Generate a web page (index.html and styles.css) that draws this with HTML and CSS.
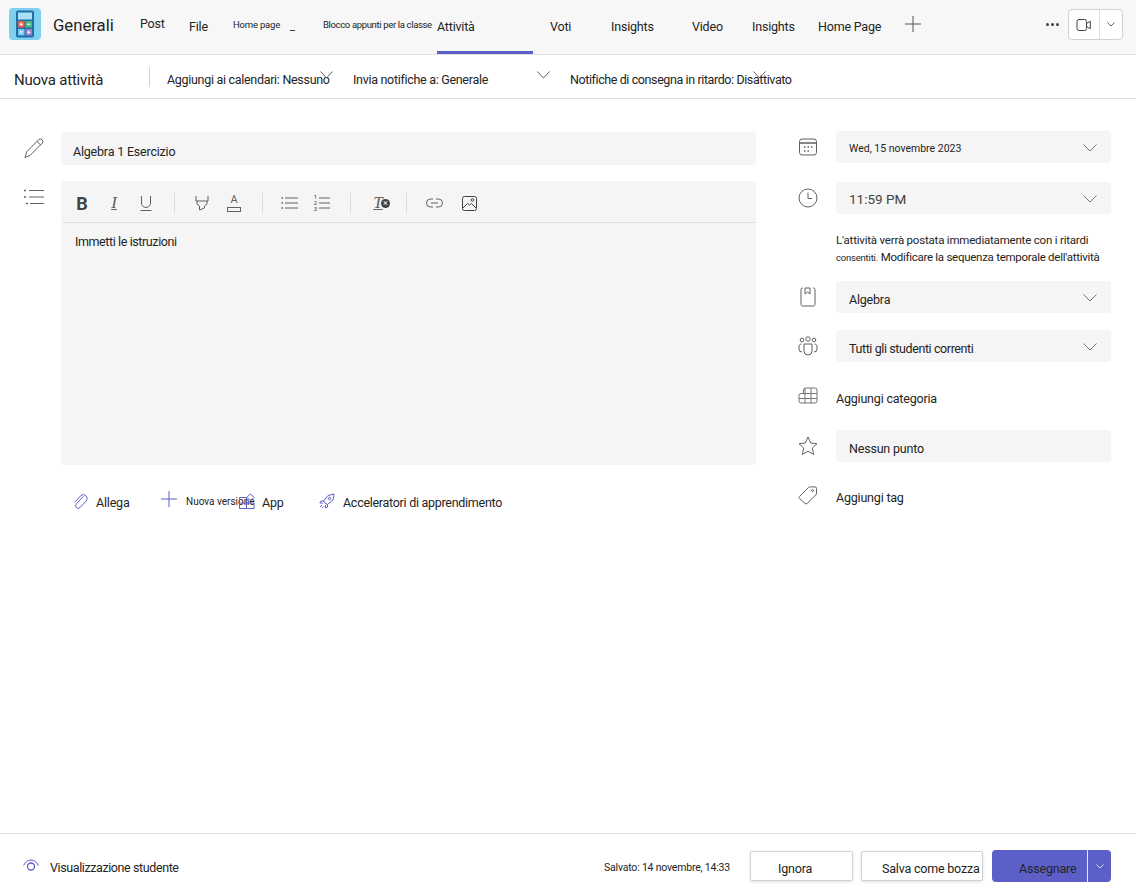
FILE: index.html
```html
<!DOCTYPE html>
<html lang="it">
<head>
    <meta charset="UTF-8">
    <meta name="viewport" content="width=device-width, initial-scale=1.0">
    <title>Nuova attività</title>
    <link rel="stylesheet" href="styles.css">
</head>
<body>
<div class="page">
    <!-- top tabs -->
    <header class="topbar">
        <svg class="logo" width="32" height="32" viewBox="0 0 32 32">
            <rect width="32" height="32" rx="4" fill="#7fd0ee"/>
            <rect x="7" y="2.500" width="18" height="27" rx="2" fill="#1d6fa8"/>
            <rect x="9" y="4.500" width="14" height="7" fill="#a8e0f5"/>
            <rect x="9" y="13" width="6.500" height="6.500" fill="#e8604c"/>
            <rect x="16.500" y="13" width="6.500" height="6.500" fill="#49b883"/>
            <rect x="9" y="21" width="6.500" height="6.500" fill="#6fc4ea"/>
            <rect x="16.500" y="21" width="6.500" height="6.500" fill="#9a7cd0"/>
            <path d="M10.500 16.200h3.500M12.200 14.500v3.500M18 16.200h3.500M10.800 22.800l3 3M13.800 22.800l-3 3M18 24.200h3.500M19.700 22.500v3.500" stroke="#fff" stroke-width="1"/>
        </svg>
        <div class="channel">Generali</div>
        <nav class="tabs">
            <a class="tab tab-post">Post</a>
            <a class="tab tab-file">File</a>
            <a class="tab tab-small tab-home">Home page</a>
            <a class="tab tab-dash">_</a>
            <a class="tab tab-small tab-notes">Blocco appunti per la classe</a>
            <a class="tab tab-active">Attività</a>
            <a class="tab tab-voti">Voti</a>
            <a class="tab tab-ins1">Insights</a>
            <a class="tab tab-video">Video</a>
            <a class="tab tab-ins2">Insights</a>
            <a class="tab tab-hp">Home Page</a>
            <svg class="tab-plus" width="16" height="16" viewBox="0 0 16 16"><path d="M8 0v16M0 8h16" stroke="#555" stroke-width="1"/></svg>
        </nav>
        <div class="more"><i></i><i></i><i></i></div>
        <div class="call">
            <div class="call-cam">
                <svg width="16" height="14" viewBox="0 0 16 14" fill="none" stroke="#424242"><rect x="1" y="1.500" width="9.500" height="11" rx="2"/><path d="M10.500 5.500l3.800-2.200v7.400l-3.800-2.200"/></svg>
            </div>
            <div class="call-more">
                <svg width="8" height="5" viewBox="0 0 8 5" fill="none" stroke="#616161"><path d="M.5.5L4 4 7.500.5"/></svg>
            </div>
        </div>
    </header>

    <!-- assignment options -->
    <div class="subbar">
        <div class="sub-title">Nuova attività</div>
        <div class="sub-sep"></div>
        <div class="sub-item sub-cal">Aggiungi ai calendari: Nessuno<svg class="sub-chev" width="13" height="8" viewBox="0 0 13 8" fill="none" stroke="#616161"><path d="M.5.5L6.500 7 12.500.5"/></svg></div>
        <div class="sub-item sub-notify">Invia notifiche a: Generale<svg class="sub-chev" width="13" height="8" viewBox="0 0 13 8" fill="none" stroke="#616161"><path d="M.5.5L6.500 7 12.500.5"/></svg></div>
        <div class="sub-item sub-late">Notifiche di consegna in ritardo: Disattivato<svg class="sub-chev" width="13" height="8" viewBox="0 0 13 8" fill="none" stroke="#616161"><path d="M.5.5L6.500 7 12.500.5"/></svg></div>
    </div>

    <main class="content">
        <section class="left">
            <div class="left-row">
                <svg class="left-icon" width="22" height="22" viewBox="0 0 22 22" fill="none" stroke="#616161"><path d="M2 20.500l1.500-5.500L15.500 2.800a2.500 2.500 0 0 1 3.700 3.400L7 18.500z"/><path d="M14 4.500l3.700 3.500"/></svg>
                <div class="field title-field">Algebra 1 Esercizio</div>
            </div>
            <div class="left-row">
                <svg class="left-icon list-icon" width="22" height="16" viewBox="0 0 22 16" fill="none" stroke="#616161"><path d="M6 1.500h15M6 8h15M7 14.500h14"/><path d="M1 1.500h2M1 8h2M3 14.500h2" stroke-width="1.500"/></svg>
                <div class="editor">
                    <div class="toolbar">
                        <button class="tool t-bold">B</button>
                        <button class="tool t-ital">I</button>
                        <button class="tool"><svg width="16" height="16" viewBox="0 0 16 16" fill="none" stroke="#616161"><path d="M3.500 1v7a4.500 4.500 0 0 0 9 0V1M2.500 15.500h11"/></svg></button>
                        <span class="tool-sep"></span>
                        <button class="tool"><svg width="16" height="16" viewBox="0 0 16 16" fill="none" stroke="#616161"><path d="M2 1v5h12V1M3 6v3l2.500 2v4l5-2v-2l2.500-2V6"/></svg></button>
                        <button class="tool t-color">A<span class="t-color-box"></span></button>
                        <span class="tool-sep"></span>
                        <button class="tool"><svg width="18" height="14" viewBox="0 0 18 14" fill="none" stroke="#616161"><path d="M4 2h13M4 7h13M4 12h13"/><path d="M.5 2h1.500M.5 7h1.500M.5 12h1.500" stroke-width="1.500"/></svg></button>
                        <button class="tool t-numbered"><span class="t-num">1<br>2<br>3</span><svg width="11" height="12" viewBox="0 0 11 12" fill="none" stroke="#616161"><path d="M0 1h11M0 6h11M0 11h11"/></svg></button>
                        <span class="tool-sep"></span>
                        <button class="tool t-clear">T</button>
                        <span class="tool-sep"></span>
                        <button class="tool"><svg width="17" height="10" viewBox="0 0 17 10" fill="none" stroke="#616161"><path d="M7 1H4.500a4 4 0 0 0 0 8H7M10 1h2.500a4 4 0 0 1 0 8H10M5 5h7"/></svg></button>
                        <button class="tool tool-image"><svg width="15" height="15" viewBox="0 0 15 15" fill="none" stroke="#424242"><rect x=".5" y=".5" width="14" height="14" rx="2"/><path d="M1 12l4.500-4.500L7.500 9 9.500 7.500 14 12"/><circle cx="10.500" cy="4" r="1.300"/></svg></button>
                    </div>
                    <div class="editor-body">Immetti le istruzioni</div>
                </div>
            </div>
            <div class="actions">
                <div class="action act-attach">
                    <svg width="15" height="17" viewBox="0 0 15 17" fill="none" stroke="#5b5fc7"><path d="M10 3L3 10.500a2.600 2.600 0 0 0 3.800 3.600L13 7.500a3.800 3.800 0 0 0-5.500-5.200L1.500 8.800" transform="translate(.3 .4)"/></svg>
                    <span>Allega</span>
                </div>
                <div class="action act-new">
                    <svg width="16" height="16" viewBox="0 0 16 16"><path d="M8 0v16M0 8h16" stroke="#5b5fc7"/></svg>
                    <span class="act-small">Nuova versione</span>
                </div>
                <div class="action act-app">
                    <svg width="16" height="16" viewBox="0 0 16 16" fill="none" stroke="#5b5fc7"><path d="M.5 4.500h7v11h-7zM.5 10h7M7.500 10h7.500v5.500H7.500"/><path d="M11.500.8L15 4.300 11.500 7.800 8 4.300z"/></svg>
                    <span>App</span>
                </div>
                <div class="action act-rocket">
                    <svg width="16" height="16" viewBox="0 0 16 16" fill="none" stroke="#5b5fc7"><path d="M6 10L4.500 8 9 2.500 15 1l-1 6-5.500 4.500z"/><circle cx="10.500" cy="5.500" r="1.200"/><path d="M4.500 8H2L.8 9.800l3 .5M8.500 11.500V14l-1.800 1-.5-3M3 12l-2 2M4.500 13.500L3 15"/></svg>
                    <span>Acceleratori di apprendimento</span>
                </div>
            </div>
        </section>

        <aside class="right">
            <div class="side-row">
                <svg class="side-icon" width="20" height="20" viewBox="0 0 20 20" fill="none" stroke="#616161"><rect x="1.500" y="2" width="17" height="16" rx="2.500"/><path d="M1.500 6h17" stroke-width="1.500"/><path d="M6 10h1.500M9.500 10H11M13 10h1.500M6 14h1.500M9.500 14H11" stroke-width="1.500"/></svg>
                <div class="field select date-field">Wed, 15 novembre 2023<svg class="chev" width="14" height="8" viewBox="0 0 14 8" fill="none" stroke="#757575"><path d="M.5.5L7 7 13.500.5"/></svg></div>
            </div>
            <div class="side-row side-gap">
                <svg class="side-icon" width="20" height="20" viewBox="0 0 20 20" fill="none" stroke="#616161"><circle cx="10" cy="10" r="9"/><path d="M10 4.500V10.500h4"/></svg>
                <div class="field select time-field">11:59 PM<svg class="chev" width="14" height="8" viewBox="0 0 14 8" fill="none" stroke="#757575"><path d="M.5.5L7 7 13.500.5"/></svg></div>
            </div>
            <p class="note">L'attività verrà postata immediatamente con i ritardi<br><span class="note-small">consentiti.</span> <span class="note-link">Modificare la sequenza temporale dell'attività</span></p>
            <div class="side-row">
                <svg class="side-icon" width="20" height="20" viewBox="0 0 20 20" fill="none" stroke="#616161"><path d="M5 1h-.5A1.500 1.500 0 0 0 3 2.500v15A1.500 1.500 0 0 0 4.500 19h11a1.500 1.500 0 0 0 1.500-1.500v-15A1.500 1.500 0 0 0 15.500 1H15"/><path d="M7 1h5v6l-2.500-2L7 7z"/></svg>
                <div class="field select">Algebra<svg class="chev" width="14" height="8" viewBox="0 0 14 8" fill="none" stroke="#757575"><path d="M.5.5L7 7 13.500.5"/></svg></div>
            </div>
            <div class="side-row">
                <svg class="side-icon" width="20" height="20" viewBox="0 0 20 20" fill="none" stroke="#616161"><circle cx="4" cy="4" r="1.800"/><circle cx="10" cy="3" r="2.200"/><circle cx="16" cy="4" r="1.800"/><path d="M6 8h8v7a4 4 0 0 1-8 0zM3.500 8C2 8 1 9 1 10v3a3 3 0 0 0 3 3M16.500 8C18 8 19 9 19 10v3a3 3 0 0 1-3 3"/></svg>
                <div class="field select tight">Tutti gli studenti correnti<svg class="chev" width="14" height="8" viewBox="0 0 14 8" fill="none" stroke="#757575"><path d="M.5.5L7 7 13.500.5"/></svg></div>
            </div>
            <div class="side-row side-gap">
                <svg class="side-icon" width="20" height="20" viewBox="0 0 20 20" fill="none" stroke="#757575"><path d="M5.500 6.500V3a2 2 0 0 1 2-2H17a2 2 0 0 1 2 2v11a2 2 0 0 1-2 2H3a2 2 0 0 1-2-2V8.500a2 2 0 0 1 2-2H19M1 11.500h18M7 1v15M13 1v15"/></svg>
                <div class="plain">Aggiungi categoria</div>
            </div>
            <div class="side-row">
                <svg class="side-icon" width="20" height="20" viewBox="0 0 20 20" fill="none" stroke="#616161"><path d="M10 1l2.700 6 6.300.7-4.700 4.300 1.300 6.500L10 15.200l-5.600 3.300L5.700 12 1 7.700 7.300 7z"/></svg>
                <div class="field">Nessun punto</div>
            </div>
            <div class="side-row">
                <svg class="side-icon" width="20" height="20" viewBox="0 0 20 20" fill="none" stroke="#616161"><path d="M1.500 11.500L10.500 2.500a2 2 0 0 1 1.500-.6h5a1.500 1.500 0 0 1 1.500 1.500v5a2 2 0 0 1-.6 1.500L9 18.500a1.500 1.500 0 0 1-2 0l-5.500-5a1.400 1.400 0 0 1 0-2z"/><circle cx="14.500" cy="5.500" r="1"/></svg>
                <div class="plain plain-tag">Aggiungi tag</div>
            </div>
        </aside>
    </main>

    <footer class="footer">
        <svg class="eye" width="16" height="13" viewBox="0 0 16 13" fill="none" stroke="#5b5fc7"><path d="M.7 6.500C2 3 5 1 8 1s6 2 7.300 5.500"/><circle cx="8" cy="7.500" r="3.500" stroke-width="1.300"/></svg>
        <div class="student">Visualizzazione studente</div>
        <div class="saved">Salvato: 14 novembre, 14:33</div>
        <button class="btn btn-ignore">Ignora</button>
        <button class="btn btn-draft">Salva come bozza</button>
        <div class="assign">
            <div class="assign-main">Assegnare</div>
            <div class="assign-more"><svg width="8" height="5" viewBox="0 0 8 5" fill="none" stroke="#d8d9f2"><path d="M.5.5L4 4 7.500.5"/></svg></div>
        </div>
    </footer>
</div>
</body>
</html>
```

FILE: styles.css
```css
* {
    box-sizing: border-box;
}
body {
    margin: 0;
    font-family: 'Roboto', 'Liberation Sans', sans-serif;
    font-size: 12.5px;
    letter-spacing: -0.2px;
    color: #242424;
    background-color: #fff;
}
.page {
    height: 892px;
    display: flex;
    flex-direction: column;
    overflow: hidden;
}
svg {
    flex-shrink: 0;
}

/* top bar */
.topbar {
    height: 55px;
    flex-shrink: 0;
    display: flex;
    align-items: flex-start;
    padding-left: 9px;
    background-color: #f7f7f7;
    border-bottom: 1px solid #e0e0e0;
}
.logo {
    margin-top: 8px;
}
.channel {
    flex-shrink: 0;
    width: 87px;
    margin: 14px 0 0 12px;
    font-size: 16.700px;
    letter-spacing: 0;
    line-height: 24px;
}
.tabs {
    display: flex;
    align-items: flex-start;
    flex-shrink: 0;
    height: 54px;
}
.tab {
    display: block;
    flex-shrink: 0;
    white-space: nowrap;
    padding-top: 19px;
    line-height: 16px;
}
.tab-small {
    font-size: 9.500px;
    padding-top: 17px;
}
.tab-post { width: 49px; padding-top: 16px; }
.tab-file { width: 44px; }
.tab-home { width: 57px; }
.tab-dash { width: 33px; padding-top: 19px; font-size: 11px; }
.tab-notes { width: 114px; letter-spacing: -0.35px; }
.tab-active {
    width: 96px;
    height: 54px;
    border-bottom: 3px solid #5b5fc7;
}
.tab-voti { width: 61px; margin-left: 17px; }
.tab-ins1 { width: 81px; }
.tab-video { width: 60px; }
.tab-ins2 { width: 66px; }
.tab-hp { width: 87px; }
.tab-plus {
    margin-top: 16px;
}
.more {
    display: flex;
    flex-shrink: 0;
    gap: 2px;
    margin: 23px 0 0 125px;
}
.more i {
    display: block;
    width: 3px;
    height: 3px;
    border-radius: 50%;
    background-color: #424242;
}
.call {
    display: flex;
    flex-shrink: 0;
    margin: 9px 0 0 9px;
    width: 55px;
    height: 31px;
    background-color: #fff;
    border: 1px solid #d1d1d1;
    border-radius: 4px;
}
.call-cam {
    width: 31px;
    display: flex;
    align-items: center;
    justify-content: center;
    border-right: 1px solid #e0e0e0;
}
.call-more {
    flex: 1;
    display: flex;
    align-items: center;
    justify-content: center;
}

/* second bar */
.subbar {
    height: 44px;
    flex-shrink: 0;
    display: flex;
    align-items: center;
    padding-left: 14px;
    border-bottom: 1px solid #e0e0e0;
}
.sub-title {
    width: 135px;
    font-size: 15px;
    padding-top: 6px;
}
.sub-sep {
    width: 1px;
    height: 20px;
    background-color: #d1d1d1;
    margin-right: 17px;
}
.sub-item {
    position: relative;
    white-space: nowrap;
    letter-spacing: -0.3px;
    padding-top: 6px;
}
.sub-chev {
    position: absolute;
    top: 5px;
}
.sub-cal { width: 186px; }
.sub-cal .sub-chev { left: 153px; }
.sub-notify { width: 217px; }
.sub-notify .sub-chev { left: 184px; }
.sub-late { letter-spacing: -0.4px; }
.sub-late .sub-chev { left: 183px; }

/* main area */
.content {
    flex: 1;
    display: flex;
}
.left {
    width: 756px;
    padding: 33px 0 0 23px;
}
.left-row {
    display: flex;
    margin-bottom: 16px;
}
.left-icon {
    width: 22px;
    margin-right: 16px;
    margin-top: 5px;
}
.list-icon {
    margin-top: 8px;
}
.field {
    position: relative;
    flex: 1;
    height: 32px;
    padding: 3px 13px 0;
    line-height: 32px;
    background-color: #f5f5f5;
    border-radius: 4px;
}
.tight {
    letter-spacing: -0.4px;
}
.title-field {
    height: 33px;
    padding-left: 12px;
    line-height: 34px;
}
.editor {
    flex: 1;
    height: 284px;
    background-color: #f5f5f5;
    border-radius: 4px;
}
.toolbar {
    display: flex;
    align-items: center;
    height: 42px;
    margin-left: 2px;
    padding: 3px 0 0 3px;
    border-bottom: 1px solid #e0e0e0;
}
.tool {
    width: 32px;
    height: 32px;
    padding: 0;
    border: none;
    background: none;
    display: flex;
    align-items: center;
    justify-content: center;
    color: #616161;
}
.tool-image {
    margin-left: 3px;
}
.tool-sep {
    width: 1px;
    height: 20px;
    margin: 0 11px 0 12px;
    background-color: #dcdcdc;
}
.t-bold {
    font: bold 18px 'Roboto', sans-serif;
    color: #424242;
}
.t-ital {
    font: italic 17px 'Liberation Serif', serif;
    text-decoration: underline;
    text-underline-offset: 1px;
}
.t-color {
    position: relative;
    font: 11px 'Roboto', sans-serif;
    padding-bottom: 7px;
}
.t-color-box {
    position: absolute;
    left: 9px;
    top: 20px;
    width: 14px;
    height: 5px;
    border: 1px solid #616161;
}
.t-numbered {
    gap: 2px;
}
.t-num {
    font: 6px/6px 'Roboto', sans-serif;
    color: #424242;
}
.t-clear {
    position: relative;
    font: italic 17px 'Liberation Serif', serif;
    text-decoration: underline;
}
.t-clear::after {
    content: "×";
    position: absolute;
    left: 19px;
    top: 12px;
    width: 9px;
    height: 9px;
    border-radius: 50%;
    background-color: #424242;
    color: #fff;
    font: 9px/9px 'Roboto', sans-serif;
    text-align: center;
    text-decoration: none;
}
.editor-body {
    padding: 11px 14px;
    line-height: 16px;
    letter-spacing: -0.4px;
}
.actions {
    display: flex;
    align-items: center;
    margin: 20px 0 0 50px;
    height: 32px;
    white-space: nowrap;
}
.action {
    display: flex;
    align-items: center;
    flex-shrink: 0;
}
.action span {
    padding-top: 2px;
}
.act-attach { width: 88px; gap: 8px; }
.act-new { width: 78px; gap: 9px; }
.act-new svg { margin-top: -4px; }
.act-app { width: 80px; gap: 7px; }
.act-rocket { gap: 8px; letter-spacing: -0.28px; }
.action .act-small {
    font-size: 10px;
    letter-spacing: 0;
    padding-top: 0;
}

/* right column */
.right {
    width: 313px;
    margin-left: 42px;
    padding-top: 32px;
}
.side-row {
    display: flex;
    align-items: flex-start;
    height: 32px;
    margin-bottom: 17px;
}
.side-gap {
    margin-top: 19px;
}
.side-icon {
    width: 20px;
    margin: 6px 18px 0 0;
}
.select .chev {
    position: absolute;
    right: 14px;
    top: 13px;
}
.date-field {
    font-size: 10.500px;
    letter-spacing: 0;
    line-height: 30px;
}
.time-field {
    font-size: 13.500px;
    letter-spacing: 0;
    line-height: 28px;
    color: #424242;
}
.plain {
    padding-top: 3px;
    line-height: 30px;
}
.plain-tag {
    line-height: 32px;
}
.note {
    height: 33px;
    margin: 0 0 17px 38px;
    padding-top: 1px;
    font-size: 11.500px;
    line-height: 17px;
    white-space: nowrap;
}
.note-small {
    font-size: 9.500px;
}
.note-link {
    letter-spacing: -0.27px;
}

/* footer */
.footer {
    height: 59px;
    flex-shrink: 0;
    display: flex;
    align-items: center;
    padding: 6px 0 0 23px;
    border-top: 1px solid #e0e0e0;
}
.eye {
    margin-right: 11px;
    margin-top: -2px;
}
.student {
    width: 554px;
    padding-top: 3px;
    letter-spacing: -0.4px;
}
.saved {
    width: 146px;
    padding-top: 3px;
    font-size: 10.500px;
}
.btn {
    height: 30px;
    padding: 5px 0 0;
    background-color: #fff;
    border: 1px solid #d1d1d1;
    border-radius: 2px;
    box-shadow: 0 1px 3px rgba(0,0,0,0.12);
    font: inherit;
    letter-spacing: -0.2px;
    color: #242424;
    white-space: nowrap;
}
.btn-ignore {
    width: 103px;
    margin-right: 8px;
    text-align: left;
    padding-left: 27px;
}
.btn-draft {
    width: 122px;
    margin-right: 9px;
    text-align: left;
    padding-left: 20px;
}
.assign {
    display: flex;
    width: 119px;
    height: 32px;
    background-color: #5b5fc7;
    border-radius: 4px;
}
.assign-main {
    width: 96px;
    padding: 11px 0 0 27px;
    border-right: 1px solid #e8e8f5;
}
.assign-more {
    flex: 1;
    display: flex;
    align-items: center;
    justify-content: center;
}
```
